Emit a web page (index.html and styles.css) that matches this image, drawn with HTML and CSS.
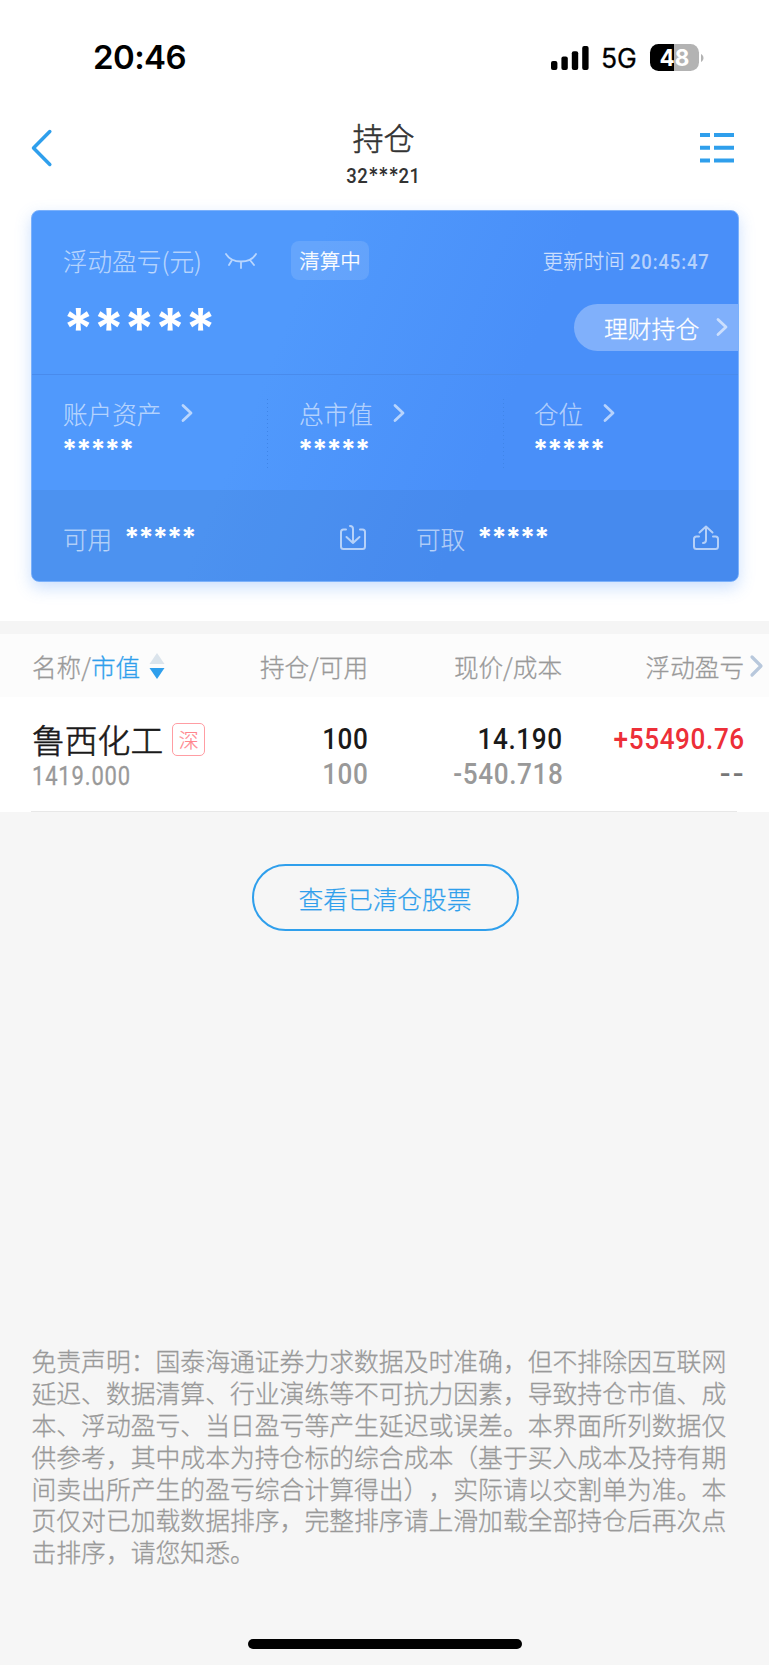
FILE: index.html
```html
<!DOCTYPE html>
<html lang="zh-CN">
<head>
<meta charset="utf-8">
<title>持仓</title>
<link rel="stylesheet" href="styles.css">
</head>
<body>
<div class="screen">
  <header class="status">
    <span class="clock">20:46</span>
    <div class="status-right">
      <svg class="signal" width="40" height="26" viewBox="0 0 40 26"><rect x="1" y="16" width="6.4" height="9" rx="2"/><rect x="11.4" y="11.5" width="6.4" height="13.5" rx="2"/><rect x="21.8" y="6.3" width="6.4" height="18.7" rx="2"/><rect x="32.2" y="1" width="6.4" height="24" rx="2"/></svg>
      <span class="net">5G</span>
      <span class="battery">48</span>
      <svg class="nub" width="4" height="10" viewBox="0 0 4 10"><path d="M1 1C4.3 2.5 4.3 7.5 1 9Z"/></svg>
    </div>
  </header>

  <nav class="nav">
    <svg class="back" width="24" height="38" viewBox="0 0 24 38"><path d="M20.8 2.500 4.500 19l16.300 16.500"/></svg>
    <div class="heading">
      <h1>持仓</h1>
      <p>32<b>***</b>21</p>
    </div>
    <svg class="list" width="34" height="30" viewBox="0 0 34 30"><path d="M0 2h10M14 2h20M0 14.8h10M14 14.8h20M0 27.6h10M14 27.6h20"/></svg>
  </nav>

  <div class="card-wrap">
  <section class="card">
    <div class="summary">
      <div class="summary-top">
        <span class="label">浮动盈亏<i>(</i>元<i>)</i></span>
        <svg class="eye" width="34" height="18" viewBox="0 0 34 18"><path d="M2 2C8 12 26 12 32 2M8 8l-3 5M17 10v6M26 8l4 5"/></svg>
        <span class="tag">清算中</span>
        <span class="updated">更新时间 <b>20:45:47</b></span>
      </div>
      <div class="summary-main">
        <span class="stars big">*****</span>
        <a class="wealth">理财持仓<svg class="chev" width="14" height="22" viewBox="0 0 14 22"><path d="M3 3.5l8 7.5-8 7.5"/></svg></a>
      </div>
    </div>
    <div class="metrics">
      <div class="metric"><span class="label">账户资产<svg class="chev" width="14" height="22" viewBox="0 0 14 22"><path d="M3 3.5l8 7.5-8 7.5"/></svg></span><span class="stars">*****</span></div>
      <div class="metric"><span class="label">总市值<svg class="chev" width="14" height="22" viewBox="0 0 14 22"><path d="M3 3.5l8 7.5-8 7.5"/></svg></span><span class="stars">*****</span></div>
      <div class="metric"><span class="label">仓位<svg class="chev" width="14" height="22" viewBox="0 0 14 22"><path d="M3 3.5l8 7.5-8 7.5"/></svg></span><span class="stars">*****</span></div>
    </div>
    <div class="funds">
      <div class="fund"><span class="label">可用</span><span class="stars">*****</span>
        <svg class="tray" width="28" height="28" viewBox="0 0 28 28"><path d="M7 5.500H4.500Q2 5.500 2 8V22.500Q2 25 4.500 25H23.500Q26 25 26 22.500V8Q26 5.500 23.500 5.500H21M11 2Q14 2 14 5V19M7.500 13l6.500 6 6.500-6"/></svg></div>
      <div class="fund"><span class="label">可取</span><span class="stars">*****</span>
        <svg class="tray" width="28" height="28" viewBox="0 0 28 28"><path d="M7 12.500H4.500Q2 12.500 2 15V22.500Q2 25 4.500 25H23.500Q26 25 26 22.500V15Q26 12.500 23.500 12.500H21M11 19Q14 19 14 16V2.500M7.500 8.500l6.500-6 6.500 6"/></svg></div>
    </div>
  </section>
  </div>

  <section class="holdings">
    <div class="row head">
      <span class="c1">名称/<em>市值</em><svg class="sort" width="16" height="26" viewBox="0 0 16 26"><path fill="#dbe4ec" d="M8 0l7.500 11H.5z"/><path fill="#2f9fec" d="M8 26L.5 15h15z"/></svg></span>
      <span class="c2">持仓/可用</span>
      <span class="c3">现价/成本</span>
      <span class="c4">浮动盈亏</span>
      <svg class="more" width="16" height="24" viewBox="0 0 16 24"><path d="M3 3l9 9-9 9"/></svg>
    </div>
    <div class="row stock">
      <div class="c1"><span class="name">鲁西化工<span class="market">深</span></span><span class="value">1419.000</span></div>
      <div class="c2"><b>100</b><span>100</span></div>
      <div class="c3"><b>14.190</b><span>-540.718</span></div>
      <div class="c4"><b class="up">+55490.76</b><span class="dash">--</span></div>
    </div>
  </section>

  <button class="cleared">查看已清仓股票</button>

  <p class="disclaimer">免责声明：国泰海通证券力求数据及时准确，但不排除因互联网<br>延迟、数据清算、行业演练等不可抗力因素，导致持仓市值、成<br>本、浮动盈亏、当日盈亏等产生延迟或误差。本界面所列数据仅<br>供参考，其中成本为持仓标的综合成本（基于买入成本及持有期<br>间卖出所产生的盈亏综合计算得出），实际请以交割单为准。本<br>页仅对已加载数据排序，完整排序请上滑加载全部持仓后再次点<br>击排序，请您知悉。</p>

  <div class="home"></div>
</div>
</body>
</html>
```

FILE: styles.css
```css
* { box-sizing: border-box; margin: 0; padding: 0; }
body { font-family: "Noto Sans CJK SC", sans-serif; font-size: 24.6px; font-weight: 300; background: #f6f6f6; text-spacing-trim: space-all; -webkit-text-stroke: .3px; }
svg { display: block; flex: none; fill: none; stroke-linecap: round; stroke-linejoin: round; }
b, i, em { font-style: normal; }
.screen { width: 769px; height: 1665px; display: flex; flex-direction: column; overflow: hidden; white-space: nowrap; }

.status { height: 115px; flex: none; background: #fff; display: flex; justify-content: space-between; padding: 0 65px 0 93px; font-family: Inter, sans-serif; color: #000; -webkit-text-stroke: 0; }
.clock { font-size: 33px; font-weight: 600; line-height: 115px; letter-spacing: -.6px; }
.status-right { display: flex; align-items: center; height: 115px; }
.signal { fill: #000; }
.net { font-size: 26.500px; font-weight: 400; margin-left: 11px; width: 49px; padding-top: 1px; -webkit-text-stroke: .3px; }
.battery { width: 49px; height: 27px; border-radius: 8.500px; background: linear-gradient(90deg, #000 24px, #b3b3b3 24px); color: #fff; font-size: 22.500px; font-weight: 700; line-height: 27px; text-align: center; }
.nub { fill: #b3b3b3; margin-left: 1px; }

.nav { height: 95px; flex: none; background: #fff; display: flex; justify-content: space-between; align-items: flex-start; padding: 0 35px 0 29px; }
.back { stroke: #2f9fec; stroke-width: 3.500; margin-top: 14px; }
.list { stroke: #2f9fec; stroke-width: 4; stroke-linecap: butt; margin-top: 18px; }
.heading { text-align: center; color: #333; padding-left: 14px; }
.heading h1 { font-size: 31px; font-weight: 300; line-height: 44px; height: 48px; -webkit-text-stroke: .5px; }
.heading p { font: 500 20.500px/26px Roboto, sans-serif; letter-spacing: .6px; transform: scaleX(.9); -webkit-text-stroke: 0; }
.heading b { font: 500 22px/20px Inter, sans-serif; letter-spacing: -.2px; }

.card-wrap { background: #fff; padding: 0 30px 39px 31px; height: 411px; flex: none; }
.card { height: 372px; border-radius: 8px; overflow: hidden; color: #fff; display: flex; flex-direction: column; background: linear-gradient(112deg, #5099fc 35%, #498ff9 65%); border: 1px solid #7bb1fb; box-shadow: 0 6px 16px rgba(73,143,249,.28); }
.card .label { color: rgba(255,255,255,.58); display: flex; align-items: center; -webkit-text-stroke: .15px; }
.label i { font-size: 25px; width: 8px; }
.summary { height: 164px; border-bottom: 1px solid #498bec; }
.summary-top { display: flex; align-items: center; padding: 29px 28px 0 31px; height: 69px; }
.eye { stroke: rgba(255,255,255,.6); stroke-width: 1.800; margin-left: 22px; margin-top: 2px; }
.tag { margin-left: 33px; width: 78px; height: 39px; border-radius: 8px; background: rgba(255,255,255,.12); font-size: 20.500px; line-height: 38px; text-align: center; flex: none; }
.updated { margin-left: auto; font-size: 20.500px; color: rgba(255,255,255,.6); }
.updated b { font: 500 21px Roboto, sans-serif; letter-spacing: 1px; display: inline-block; transform: scaleX(.88); transform-origin: 100% 50%; margin-left: -10px; -webkit-text-stroke: 0; }
.summary-main { display: flex; justify-content: space-between; padding: 24px 0 0 31px; }
.stars { font-family: Inter, sans-serif; font-weight: 700; font-size: 27px; letter-spacing: -.85px; line-height: 30px; -webkit-text-stroke: 0; }
.stars.big { font-size: 55px; letter-spacing: -.2px; line-height: 60px; margin-top: -6px; }
.wealth { width: 164px; height: 47px; border-radius: 24px 0 0 24px; background: rgba(255,255,255,.3); display: flex; align-items: center; padding: 0 0 1px 30px; font-size: 23.800px; }
.chev { stroke: rgba(255,255,255,.6); stroke-width: 2.800; margin-left: 19px; }
.wealth .chev { margin-left: 16px; }
.metrics { height: 115px; display: grid; grid-template-columns: 236px 236px 1fr; }
.metric { padding: 20px 0 0 31px; background: repeating-linear-gradient(#3f85e8 0 1px, transparent 1px 4px) 100% 24px / 1px 70px no-repeat; }
.metric:last-child { background: none; padding-left: 30px; }
.metric .label { height: 36px; }
.metric .stars { display: block; margin-top: 4px; margin-left: -1px; }
.funds { flex: 1; display: grid; grid-template-columns: 1fr 1fr; background: rgba(60,115,190,.18); }
.fund { display: flex; align-items: center; padding: 4px 18px 0 31px; }
.fund .stars { margin-left: 12px; }
.tray { stroke: rgba(255,255,255,.6); stroke-width: 2; margin-left: auto; }

.holdings { padding-top: 13px; flex: none; background: #f5f5f5; }
.row { display: grid; grid-template-columns: 221px 115px 194px 182px 1fr; padding-left: 32px; }
.head { height: 63px; background: #fcfcfc; color: #999; align-items: center; }
.head .c1 { display: flex; align-items: center; }
.head em { color: #2f9fec; }
.sort { margin-left: 9px; }
.more { stroke: #b8c8dc; stroke-width: 3.200; margin-left: 5px; }
.c2, .c3, .c4 { text-align: right; }
.stock { height: 115px; background: linear-gradient(#e8e8e8, #e8e8e8) 31px 100% / 706px 1px no-repeat #fff; color: #999; font-family: Roboto, "Noto Sans CJK SC", sans-serif; font-weight: 500; -webkit-text-stroke: 0; }
.stock > div { display: flex; flex-direction: column; align-items: flex-end; padding-top: 25px; font-size: 29px; line-height: 35px; }
.stock > .c1 { align-items: flex-start; padding-top: 20px; }
.stock b, .stock .c2 span, .stock .c3 span { font-weight: 500; letter-spacing: .7px; transform: scaleX(.9); transform-origin: 100% 50%; margin-right: -1px; }
.stock b { color: #1a1a1a; }
.stock .up { color: #ed2f38; }
.stock .dash { letter-spacing: 2px; margin-right: -2px; color: #777; transform: scaleX(1.1); transform-origin: 100% 50%; }
.name { font: 300 32.800px/44px "Noto Sans CJK SC", sans-serif; color: #1a1a1a; display: flex; align-items: center; -webkit-text-stroke: .6px; }
.market { margin-left: 9px; width: 33px; height: 33px; border: 1px solid #ff9da3; border-radius: 5px; font-size: 20px; line-height: 31px; text-align: center; color: #ff858c; -webkit-text-stroke: .2px; }
.value { font-size: 25.500px; line-height: 30px; letter-spacing: 1px; font-weight: 400; transform: scaleX(.86); transform-origin: 0 50%; -webkit-text-stroke: .3px; }

.cleared { align-self: center; margin: 52px 0 0 1px; width: 267px; height: 67px; flex: none; border: 2px solid #2f9fec; border-radius: 34px; background: transparent; color: #2f9fec; font: 300 24.700px "Noto Sans CJK SC", sans-serif; -webkit-text-stroke: .25px; }
.disclaimer { margin: auto 0 0 31.500px; font-size: 24.820px; line-height: 31.830px; color: #999; }
.home { width: 274px; height: 10px; flex: none; border-radius: 5px; background: #000; margin: 71px 0 16px; align-self: center; }
```
